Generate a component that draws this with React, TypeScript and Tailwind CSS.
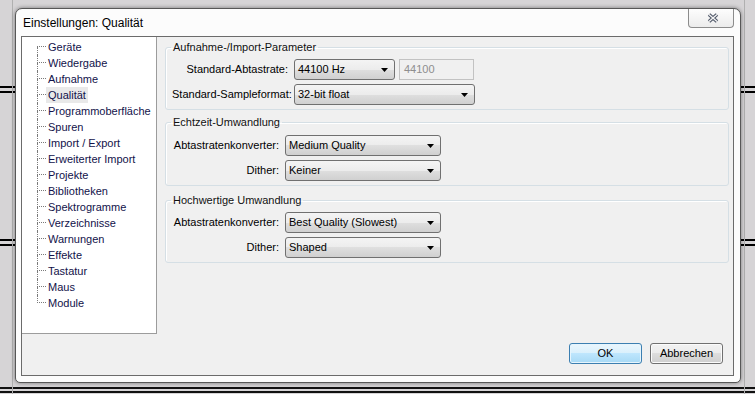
const pages = [
  "Geräte",
  "Wiedergabe",
  "Aufnahme",
  "Qualität",
  "Programmoberfläche",
  "Spuren",
  "Import / Export",
  "Erweiterter Import",
  "Projekte",
  "Bibliotheken",
  "Spektrogramme",
  "Verzeichnisse",
  "Warnungen",
  "Effekte",
  "Tastatur",
  "Maus",
  "Module",
];

function Combo({ value, width }: { value: string; width: string }) {
  return (
    <div
      className={`${width} shrink-0 h-[21px] flex items-center justify-between rounded-[3px] border border-[#707070] bg-[linear-gradient(#f4f4f4,#ececec_50%,#dfdfdf_50%,#d0d0d0)] pl-[3px] pr-[6px] text-black`}
    >
      <span className="whitespace-nowrap">{value}</span>
      <svg width="7" height="4" viewBox="0 0 7 4">
        <path d="M0 0h7L3.5 4z" fill="#000" />
      </svg>
    </div>
  );
}

function Row({ label, labelWidth, children }: { label: string; labelWidth: string; children: React.ReactNode }) {
  return (
    <div className="flex items-center gap-[6px] h-[21px]">
      <span className={`${labelWidth} shrink-0 whitespace-nowrap text-right text-black`}>{label}</span>
      {children}
    </div>
  );
}

function Group({ title, className, children }: { title: string; className: string; children: React.ReactNode }) {
  return (
    <fieldset
      className={`${className} rounded-[3px] border border-[#d5dfe5] shadow-[inset_1px_1px_0_#ffffff] pl-[6px] pb-[4px]`}
    >
      <legend className="ml-[-1px] px-[2px] h-[14px] leading-[14px] text-[#111]">{title}</legend>
      <div className="flex flex-col gap-[4px]">{children}</div>
    </fieldset>
  );
}

function TreeItem({ label, index, last }: { label: string; index: number; last: boolean }) {
  const selected = label === "Qualität";
  return (
    <div className="flex items-center h-[16px]">
      <div className="flex flex-col w-[9px] h-[16px]">
        <div
          className={`h-[8px] border-b border-dotted border-[#7a7a7a] ${index === 0 ? "" : "border-l"}`}
        />
        <div className={`h-[8px] border-dotted border-[#7a7a7a] ${last ? "" : "border-l"}`} />
      </div>
      <span
        className={`px-[2px] h-[16px] leading-[16px] whitespace-nowrap text-[#12124a] ${selected ? "bg-[#e9e9e9]" : ""}`}
      >
        {label}
      </span>
    </div>
  );
}

function Underlay() {
  return (
    <>
      {/* background app behind the dialog */}
      <div className="absolute left-0 top-[86px] w-[16px] h-[2px] bg-black" />
      <div className="absolute left-0 top-[91px] w-[16px] h-[2px] bg-black" />
      <div className="absolute left-0 top-[239px] w-[16px] h-[2px] bg-black" />
      <div className="absolute left-0 top-[244px] w-[16px] h-[2px] bg-black" />
      <div className="absolute right-0 top-[86px] w-[16px] h-[2px] bg-black" />
      <div className="absolute right-0 top-[91px] w-[16px] h-[2px] bg-black" />
      <div className="absolute right-0 top-[239px] w-[16px] h-[2px] bg-black" />
      <div className="absolute right-0 top-[244px] w-[16px] h-[2px] bg-black" />
      <div className="absolute left-0 top-[387px] w-full h-[2px] bg-[#111]" />
      <div className="absolute left-0 top-[391px] w-full h-[2px] bg-[#111]" />
      <div className="absolute left-[12px] top-0 w-[1px] h-full bg-[#b0b0b0]" />
      <div className="absolute right-[10px] top-0 w-[1px] h-full bg-[#b0b0b0]" />
    </>
  );
}

export default function App() {
  return (
    <div className="relative w-[755px] h-[394px] overflow-hidden bg-[#d6d4d6] font-['Liberation_Sans',Arial,sans-serif] text-[11px]">
      <Underlay />

      {/* Dialog window */}
      <div className="absolute left-[15px] top-[8px] w-[726px] h-[375px] flex flex-col rounded-t-[7px] rounded-b-[5px] border border-[#575757] bg-[#fcfcfc] shadow-[0_0_4px_rgba(0,0,0,0.45)]">
        {/* Title bar */}
        <div className="h-[27px] flex items-start justify-between pl-[7px] pr-[6px]">
          <span className="h-[27px] leading-[28px] text-[12px] text-black">Einstellungen: Qualität</span>
          <div className="w-[46px] h-[19px] flex items-center justify-center rounded-b-[4px] border border-t-0 border-[#8c8c8c] bg-[linear-gradient(#fdfdfd,#ececec)] pl-[3px]">
            <svg width="12" height="10" viewBox="0 0 12 10">
              <path d="M2 1.5L10 8.5M10 1.5L2 8.5" stroke="#4d5566" strokeWidth="3.6" />
              <path d="M2 1.5L10 8.5M10 1.5L2 8.5" stroke="#f4f4f4" strokeWidth="1.4" />
            </svg>
          </div>
        </div>

        {/* Client area */}
        <div className="ml-[5px] mr-[6px] h-[340px] flex flex-col border border-[#6b6b6b] bg-[#f0f0f0]">
          <div className="flex h-[297px]">
            {/* Tree */}
            <div className="w-[135px] shrink-0 border-r border-b border-[#9c9c9c] bg-white pt-[2px] pl-[15px]">
              {pages.map((p, i) => (
                <TreeItem key={p} label={p} index={i} last={i === pages.length - 1} />
              ))}
            </div>

            {/* Settings */}
            <div className="flex-1 flex flex-col pl-[8px] pr-[4px] pt-[3px]">
              <Group title="Aufnahme-/Import-Parameter" className="pt-[5px]">
                <Row label="Standard-Abtastrate:" labelWidth="w-[116px]">
                  <Combo value="44100 Hz" width="w-[101px]" />
                  <div className="ml-[-2px] w-[75px] h-[21px] flex items-center border border-[#c2c2c2] pl-[4px] text-[#8e8e8e]">
                    44100
                  </div>
                </Row>
                <Row label="Standard-Sampleformat:" labelWidth="w-[116px]">
                  <Combo value="32-bit float" width="w-[181px]" />
                </Row>
              </Group>

              <Group title="Echtzeit-Umwandlung" className="mt-[5px] pt-[6px]">
                <Row label="Abtastratenkonverter:" labelWidth="w-[107px]">
                  <Combo value="Medium Quality" width="w-[156px]" />
                </Row>
                <Row label="Dither:" labelWidth="w-[107px]">
                  <Combo value="Keiner" width="w-[156px]" />
                </Row>
              </Group>

              <Group title="Hochwertige Umwandlung" className="mt-[7px] pt-[5px]">
                <Row label="Abtastratenkonverter:" labelWidth="w-[107px]">
                  <Combo value="Best Quality (Slowest)" width="w-[156px]" />
                </Row>
                <Row label="Dither:" labelWidth="w-[107px]">
                  <Combo value="Shaped" width="w-[156px]" />
                </Row>
              </Group>
            </div>
          </div>

          {/* Buttons */}
          <div className="flex-1 flex items-end justify-end gap-[8px] pr-[10px] pb-[11px]">
            <button className="w-[73px] h-[21px] rounded-[3px] border border-[#3c7fb1] bg-[linear-gradient(#eaf6fd,#d9f0fc_50%,#bee6fd_50%,#a7d9f5)] shadow-[inset_0_0_0_1px_#e6f5fd] text-black">
              OK
            </button>
            <button className="w-[73px] h-[21px] rounded-[3px] border border-[#707070] bg-[linear-gradient(#f2f2f2,#ebebeb_50%,#dddddd_50%,#cfcfcf)] shadow-[inset_0_0_0_1px_#fbfbfb] text-black">
              Abbrechen
            </button>
          </div>
        </div>
      </div>
    </div>
  );
}
